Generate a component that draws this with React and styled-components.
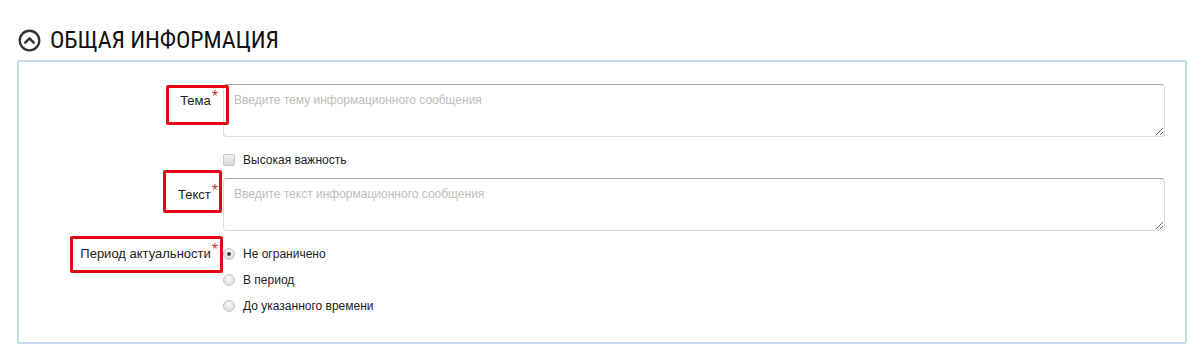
import React from 'react';
import styled, { createGlobalStyle } from 'styled-components';

const GlobalStyle = createGlobalStyle`
  body {
    margin: 0;
    background: #fff;
    font-family: "Liberation Sans", Arial, sans-serif;
    color: #222;
  }
`;

const Page = styled.div`
  padding: 28px 0 0 17px;
`;

const SectionHeader = styled.div`
  display: flex;
  align-items: center;
  gap: 9px;
  height: 24px;
  margin-bottom: 8px;
  margin-left: 1px;
`;

const SectionTitle = styled.h2`
  margin: 0;
  font-family: "Roboto Condensed", "Liberation Sans Narrow", "DejaVu Sans Condensed", Roboto, sans-serif;
  font-weight: 400;
  font-size: 24px;
  line-height: 24px;
  color: #111;
  letter-spacing: -0.1px;
`;

const Panel = styled.div`
  width: 1166px;
  border: 2px solid #c6dcee;
  border-radius: 2px;
  padding: 22px 0 23px;
`;

const FieldRow = styled.div`
  display: flex;
  margin-top: ${p => p.$gap || 0}px;
`;

const LabelCell = styled.div`
  position: relative;
  width: 199px;
  padding-right: 5px;
  padding-top: ${p => p.$top || 0}px;
  text-align: right;
  font-size: 13px;
  line-height: 16px;
  color: #222;
  flex-shrink: 0;
`;

const Required = styled.sup`
  color: #c0392b;
  font-size: 16px;
  line-height: 0;
  position: relative;
  top: 2px;
  margin-left: 1px;
`;

const Marker = styled.span`
  position: absolute;
  left: ${p => p.$left}px;
  top: ${p => p.$top}px;
  width: ${p => p.$width}px;
  height: ${p => p.$height}px;
  border: 3px solid #e30613;
  border-radius: 2px;
  box-sizing: border-box;
  pointer-events: none;
`;

const Content = styled.div`
  flex: 1;
  padding-right: 20px;
`;

const TextArea = styled.textarea`
  display: block;
  box-sizing: border-box;
  width: 942px;
  height: 53px;
  margin: 0;
  padding: 7px 10px;
  border: 1px solid #dcdcdc;
  border-top-color: #a8a8a8;
  border-radius: 4px;
  font-family: "Liberation Sans", Arial, sans-serif;
  font-size: 12px;
  line-height: 16px;
  color: #333;
  resize: vertical;
  outline: none;

  &::placeholder {
    color: #bdbdbd;
  }
`;

const OptionLabel = styled.label`
  display: flex;
  align-items: center;
  gap: 8px;
  height: ${p => p.$height || 26}px;
  font-size: 12px;
  color: #222;
`;

const CheckBox = styled.input.attrs({ type: 'checkbox' })`
  appearance: none;
  margin: 0;
  width: 12px;
  height: 12px;
  border: 1px solid #c4c4c4;
  border-radius: 2px;
  background: linear-gradient(#f2f2f2, #d6d6d6);
`;

const Radio = styled.input.attrs({ type: 'radio' })`
  appearance: none;
  margin: 0;
  width: 12px;
  height: 12px;
  border: 1px solid #c6c6c6;
  border-radius: 50%;
  background: radial-gradient(circle at 50% 35%, #fafafa, #d4d4d4);
  position: relative;

  &:checked::after {
    content: '';
    position: absolute;
    left: 3px;
    top: 3px;
    width: 4px;
    height: 4px;
    border-radius: 50%;
    background: #444;
  }
`;

const CollapseIcon = () => (
  <svg width="23" height="23" viewBox="0 0 24 24">
    <circle cx="12" cy="12" r="10.2" fill="none" stroke="#333" strokeWidth="2.4" />
    <path d="M7.6 14.2 L12 9.8 L16.4 14.2" fill="none" stroke="#333" strokeWidth="2.6" strokeLinecap="round" strokeLinejoin="round" />
  </svg>
);

const periods = ['Не ограничено', 'В период', 'До указанного времени'];

export default function App() {
  return (
    <Page>
      <GlobalStyle />
      <SectionHeader>
        <CollapseIcon />
        <SectionTitle>ОБЩАЯ ИНФОРМАЦИЯ</SectionTitle>
      </SectionHeader>
      <Panel>
        <FieldRow>
          <LabelCell $top={9}>
            Тема<Required>*</Required>
            <Marker $left={147} $top={1} $width={63} $height={40} />
          </LabelCell>
          <Content>
            <TextArea placeholder="Введите тему информационного сообщения" />
          </Content>
        </FieldRow>
        <FieldRow $gap={13}>
          <LabelCell />
          <Content>
            <OptionLabel $height={20}>
              <CheckBox />
              Высокая важность
            </OptionLabel>
          </Content>
        </FieldRow>
        <FieldRow $gap={8}>
          <LabelCell $top={9}>
            Текст<Required>*</Required>
            <Marker $left={144} $top={-8} $width={59} $height={43} />
          </LabelCell>
          <Content>
            <TextArea placeholder="Введите текст информационного сообщения" />
          </Content>
        </FieldRow>
        <FieldRow $gap={10}>
          <LabelCell $top={5}>
            Период актуальности<Required>*</Required>
            <Marker $left={51} $top={-5} $width={153} $height={37} />
          </LabelCell>
          <Content>
            {periods.map((p, i) => (
              <OptionLabel key={p}>
                <Radio name="period" defaultChecked={i === 0} />
                {p}
              </OptionLabel>
            ))}
          </Content>
        </FieldRow>
      </Panel>
    </Page>
  );
}
